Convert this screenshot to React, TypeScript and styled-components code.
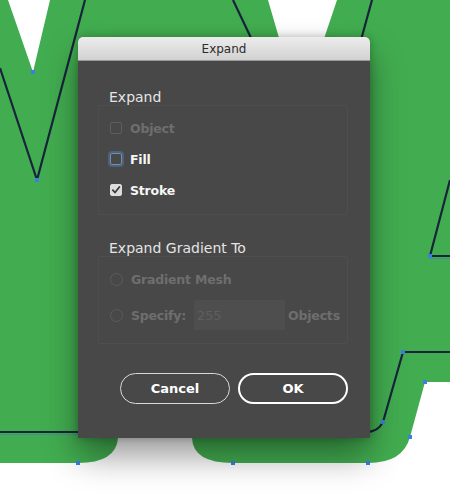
import React from 'react';
import styled, { createGlobalStyle } from 'styled-components';

const GlobalStyle = createGlobalStyle`
  html, body {
    margin: 0;
    padding: 0;
    background: #ffffff;
  }
  body {
    font-family: "DejaVu Sans", "Liberation Sans", sans-serif;
  }
`;

const Stage = styled.div`
  position: relative;
  width: 450px;
  height: 498px;
  overflow: hidden;
  background: #ffffff;
`;

const Artwork = styled.svg`
  position: absolute;
  left: 0;
  top: 0;
  width: 450px;
  height: 498px;
`;

const Dialog = styled.div`
  position: relative;
  margin: 37px 0 0 78px;
  width: 292px;
  height: 401px;
  display: flex;
  flex-direction: column;
  background: #484848;
  border-radius: 5px 5px 0 0;
  box-shadow: 0 18px 34px rgba(0, 0, 0, 0.4), 0 0 8px rgba(0, 0, 0, 0.25);
`;

const TitleBar = styled.div`
  height: 23px;
  display: flex;
  align-items: center;
  justify-content: center;
  background: linear-gradient(#ececec, #d2d2d2);
  border-radius: 5px 5px 0 0;
  border-bottom: 1px solid #9a9a9a;
  font-size: 12px;
  color: #2c2c2c;
`;

const Body = styled.div`
  display: flex;
  flex-direction: column;
  padding: 28px 22px 0 20px;
`;

const SectionLabel = styled.div<{ $gap?: number }>`
  margin-top: ${p => p.$gap ?? 0}px;
  padding-left: 11px;
  font-size: 14px;
  line-height: 16px;
  color: #e4e4e4;
`;

const GroupBox = styled.div<{ $height: number; $padTop: number; $gap: number }>`
  height: ${p => p.$height}px;
  box-sizing: border-box;
  border: 1px solid #4e4e4e;
  border-radius: 2px;
  padding: ${p => p.$padTop}px 0 0 11px;
  display: flex;
  flex-direction: column;
  gap: ${p => p.$gap}px;
`;

const OptionRow = styled.div<{ $disabled?: boolean }>`
  display: flex;
  align-items: center;
  gap: 8px;
  min-height: 16px;
  font-size: 12.5px;
  letter-spacing: -0.2px;
  font-weight: bold;
  color: ${p => (p.$disabled ? '#6e6e6e' : '#f6f6f6')};
`;

const CheckBox = styled.div<{ $state: 'disabled' | 'focus' | 'checked' }>`
  width: 12px;
  height: 12px;
  box-sizing: border-box;
  border-radius: 2px;
  display: flex;
  align-items: center;
  justify-content: center;
  border: 1px solid
    ${p => (p.$state === 'disabled' ? '#5e5e5e' : p.$state === 'focus' ? '#6f8fb6' : '#dcdcdc')};
  background: ${p => (p.$state === 'checked' ? '#dcdcdc' : 'transparent')};
  box-shadow: ${p => (p.$state === 'focus' ? '0 0 0 2px rgba(86, 128, 178, 0.45)' : 'none')};
`;

const Radio = styled.div`
  width: 13px;
  height: 13px;
  box-sizing: border-box;
  border-radius: 50%;
  border: 1px solid #5c5c5c;
`;

const CountInput = styled.div`
  width: 91px;
  height: 30px;
  box-sizing: border-box;
  padding-left: 3px;
  display: flex;
  align-items: center;
  background: #4e4e4e;
  font-weight: normal;
  color: #5f5f5f;
  font-size: 13px;
`;

const Unit = styled.span`
  margin-left: -5px;
`;

const ButtonRow = styled.div`
  display: flex;
  gap: 8px;
  margin: 29px 0 0 22px;
`;

const Button = styled.div<{ $primary?: boolean }>`
  width: 112px;
  height: 31px;
  box-sizing: border-box;
  border-radius: 16px;
  border: ${p => (p.$primary ? '2.5px solid #ffffff' : '1.5px solid #d8d8d8')};
  display: flex;
  align-items: center;
  justify-content: center;
  font-size: 13px;
  font-weight: bold;
  color: #ffffff;
`;

const Check = () => (
  <svg width="10" height="10" viewBox="0 0 10 10">
    <path d="M1.8 5.2 L4 7.5 L8.4 2" fill="none" stroke="#3a3a3a" strokeWidth="1.8" strokeLinecap="round" strokeLinejoin="round" />
  </svg>
);

const anchors: [number, number][] = [
  [33, 72], [37, 180], [430, 256], [403, 352], [425, 382],
  [410, 437], [383, 422], [368, 463], [233, 463], [78, 463],
];

const Background = () => (
  <Artwork viewBox="0 0 450 498">
    <rect width="450" height="498" fill="#ffffff" />
    <path
      d="M0 0 L8 0 L33 72 L50 0 L268 0 L300 110 L337 0 L450 0 L450 382 L425 382 L410 437 Q403 463 368 463 L233 463 Q193 463 192 438 L118 438 Q116 463 78 463 L0 463 Z"
      fill="#42ad50"
    />
    <g fill="none" stroke="#17243a" strokeWidth="2.2" strokeLinejoin="round">
      <path d="M0 68 L37 180 L85 0" />
      <path d="M233 0 L252 40" />
      <path d="M372 0 L361 40" />
      <path d="M450 180 L430 256 L450 256" />
      <path d="M450 352 L403 352 L383 422 Q378 432 366 432" />
      <path d="M0 432 L80 432" />
    </g>
    <g fill="none" stroke="#3f7fc8" strokeWidth="0.8" opacity="0.7">
      <path d="M430 258.5 L450 258.5" />
      <path d="M0 434.5 L80 434.5" />
    </g>
    {anchors.map(([x, y], i) => (
      <rect key={i} x={x - 2} y={y - 2} width="4" height="4" fill="#3b7fe0" />
    ))}
  </Artwork>
);

export default function App() {
  return (
    <Stage>
      <GlobalStyle />
      <Background />
      <Dialog>
        <TitleBar>Expand</TitleBar>
        <Body>
          <SectionLabel>Expand</SectionLabel>
          <GroupBox $height={110} $padTop={14} $gap={15}>
            <OptionRow $disabled>
              <CheckBox $state="disabled" />
              Object
            </OptionRow>
            <OptionRow>
              <CheckBox $state="focus" />
              Fill
            </OptionRow>
            <OptionRow>
              <CheckBox $state="checked">
                <Check />
              </CheckBox>
              Stroke
            </OptionRow>
          </GroupBox>

          <SectionLabel $gap={25}>Expand Gradient To</SectionLabel>
          <GroupBox $height={88} $padTop={14} $gap={13}>
            <OptionRow $disabled>
              <Radio />
              Gradient Mesh
            </OptionRow>
            <OptionRow $disabled>
              <Radio />
              Specify:
              <CountInput>255</CountInput>
              <Unit>Objects</Unit>
            </OptionRow>
          </GroupBox>

          <ButtonRow>
            <Button>Cancel</Button>
            <Button $primary>OK</Button>
          </ButtonRow>
        </Body>
      </Dialog>
    </Stage>
  );
}
